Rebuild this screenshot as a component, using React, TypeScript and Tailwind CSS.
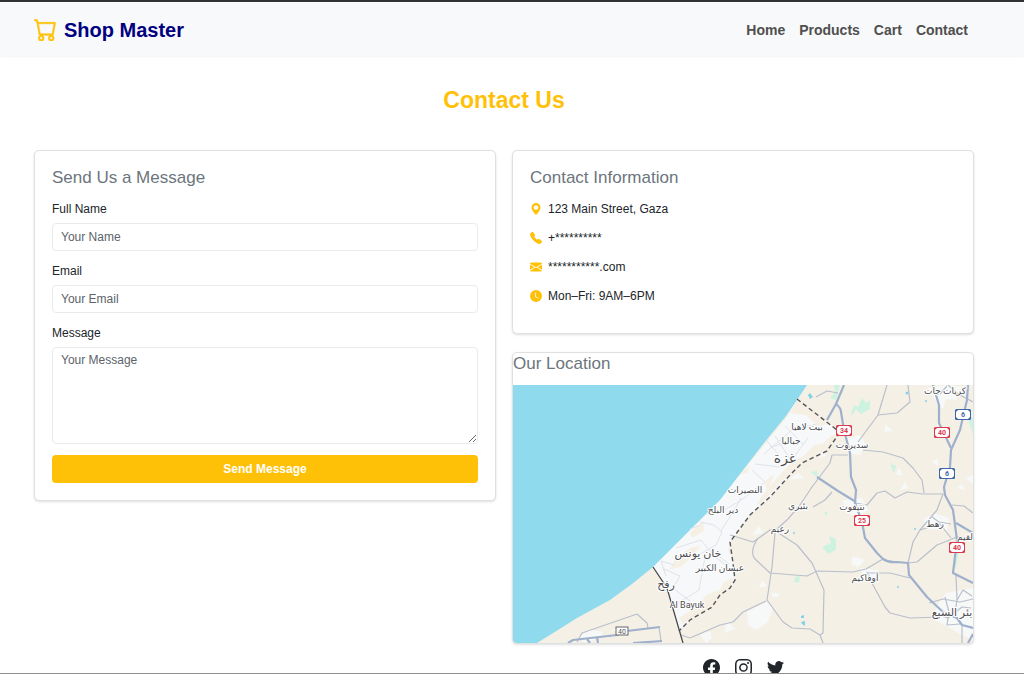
import type { ReactNode } from "react";
import {
  BsCart,
  BsClockFill,
  BsEnvelopeFill,
  BsFacebook,
  BsGeoAltFill,
  BsInstagram,
  BsTelephoneFill,
  BsTwitter,
} from "react-icons/bs";

const navLinks = ["Home", "Products", "Cart", "Contact"];

const contactRows = [
  { icon: BsGeoAltFill, text: "123 Main Street, Gaza" },
  { icon: BsTelephoneFill, text: "+**********" },
  { icon: BsEnvelopeFill, text: "***********.com" },
  { icon: BsClockFill, text: "Mon–Fri: 9AM–6PM" },
];

const socials = [
  { icon: BsFacebook, label: "Facebook" },
  { icon: BsInstagram, label: "Instagram" },
  { icon: BsTwitter, label: "Twitter" },
];

const mainRoads = [
  "M844 385L836 404L827 420",
  "M836 404Q841 408 841 412L844 430L850 453L851 477L856 490L855 503L862 522L865 538L877 553L883 559Q889 563 897 562L908 563L909 575L927 597L943 612L957 618L962 625L973 628",
  "M817 477L838 491L856 502",
  "M968 385L967 400L960 430L951 450L950 467L944 487L945 495L953 510L957 540L953 573L973 583",
  "M956 523L973 533",
  "M933 385L939 405L939 423L951 448",
  "M568 643L573 640L617 635L627 631L660 627",
  "M633 643L662 641",
  "M587 639L590 643M597 637L598 643",
  "M973 634L968 643",
];

const minorRoads = [
  "M887 385L878 415L858 442",
  "M878 415L897 413L910 402L908 385",
  "M863 450L883 452L903 458L913 468L922 480L924 493",
  "M855 503L867 505L877 493L885 491L895 498L907 492L923 494L943 494L937 510L920 530L913 542L908 563",
  "M848 455L832 455L830 463L812 487L800 505L788 519L777 529L770 530L753 542L730 535",
  "M832 492L825 500L813 507",
  "M758 538Q749 552 755 559L770 573L807 576L817 571L853 572L866 569L883 559",
  "M775 533L772 567L767 600L783 622L792 628L810 629L820 635L823 643",
  "M777 532L797 545L812 563L824 590L823 633L820 635",
  "M766 601L743 612L733 622L720 625L690 638L681 635",
  "M908 563L917 562L937 545L957 537L973 538",
  "M867 572L873 585L885 607L890 613L910 618L940 617",
  "M867 573L890 573L910 578",
  "M920 530L940 524L951 538",
  "M932 517L939 522L951 524",
  "M577 642L582 633L637 614L647 623L648 628",
  "M659 627L661 641",
  "M948 385L958 394L973 402",
  "M816 397L827 391L838 393",
  "M956 575L957 600L955 613",
  "M929 603L943 599L960 602L973 599M935 614L948 618L962 607L971 608",
  "M945 597L949 612L947 625L960 624M957 600L963 590L972 596M962 625V643",
  "M952 505L964 506L973 513M940 394L947 386",
];

const stripStreets = [
  "M764 454L792 430L817 424M775 436L790 459M785 426L803 444",
  "M755 464L780 467L794 457L808 438",
  "M770 447L790 442M778 454L766 440M752 470L765 482L740 501L724 510",
  "M700 522L714 525L722 532L716 545L702 553L690 561",
  "M690 529L700 525M676 548L701 540L714 556L728 567",
  "M664 569L680 576L673 588L690 601M666 576L661 561L674 565",
  "M721 531L736 507L741 498M705 557L699 590L678 603M712 551L729 564",
];

const townBlocks = [
  "M848 438L860 435L866 445L860 455L848 453Z",
  "M843 500L862 498L868 510L858 517L846 513Z",
  "M861 568L878 570L880 579L862 579Z",
  "M928 388L945 385L962 387L956 400L946 399L943 409L936 402Z",
  "M924 519L934 513L949 518L947 530L925 529Z",
  "M936 607L946 593L973 588V640L958 633L950 628L935 620Z",
  "M747 612L767 602L773 608L768 622L756 630L748 625Z",
  "M772 593H779V597H772ZM853 556L865 560L858 567L851 564Z",
  "M700 635L710 631L712 638L706 643ZM727 621L735 629L724 633Z",
  "M932 462L938 458V466ZM896 474L900 467L902 476ZM818 458L824 450L826 456Z",
  "M861 399L867 404L860 407ZM886 424L892 431L884 432ZM900 490L905 482L908 488Z",
  "M577 638L590 630L603 632L600 638L585 642ZM612 630L619 627L618 632Z",
  "M788 480L798 473L804 478ZM752 535L759 526L763 533ZM762 580L767 586L759 588Z",
  "M957 488L962 484L965 490ZM966 478L973 475V484Z",
];

const parks = [
  "M850 416L854 405L858 407L862 398L866 403L870 400L870 409L861 414L856 409L854 413Z",
  "M822 547L831 543L829 536L836 539L836 550L828 554Z",
  "M834 385H840L836 400L830 398L835 392Z",
  "M890 463L896 466L894 474ZM795 577L800 576L799 583L794 582Z",
  "M811 472L817 471L818 478ZM968 419L973 417V435ZM956 552L959 550L956 568L954 565ZM823 513L827 512L827 516Z",
];

const places = [
  { name: "كريات جات", x: 945, y: 394, size: 9 },
  { name: "بيت لاهيا", x: 807, y: 430, size: 9 },
  { name: "جباليا", x: 791, y: 444, size: 9 },
  { name: "غزة", x: 785, y: 463, size: 14 },
  { name: "سديروت", x: 852, y: 448, size: 9 },
  { name: "النصيرات", x: 745, y: 493, size: 9 },
  { name: "دير البلح", x: 723, y: 513, size: 9 },
  { name: "بئيري", x: 798, y: 509, size: 9 },
  { name: "نتيفوت", x: 852, y: 510, size: 9 },
  { name: "رعيم", x: 780, y: 532, size: 9 },
  { name: "خان يونس", x: 698, y: 557, size: 11 },
  { name: "عبسان الكبير", x: 720, y: 571, size: 9 },
  { name: "رفح", x: 666, y: 588, size: 11 },
  { name: "Al Bayuk", x: 687, y: 608, size: 9 },
  { name: "أوفاكيم", x: 865, y: 581, size: 9 },
  { name: "رهط", x: 935, y: 527, size: 9 },
  { name: "لقيم", x: 965, y: 540, size: 9 },
  { name: "بئر السبع", x: 952, y: 616, size: 11 },
];

const shields = [
  { no: "34", x: 844, y: 431, color: "#dc3a50" },
  { no: "40", x: 942, y: 433, color: "#dc3a50" },
  { no: "25", x: 862, y: 521, color: "#dc3a50" },
  { no: "40", x: 957, y: 548, color: "#dc3a50" },
  { no: "6", x: 963, y: 415, color: "#3f66a8" },
  { no: "6", x: 947, y: 474, color: "#3f66a8" },
];

function LocationMap() {
  return (
    <svg
      viewBox="513 385 460 258"
      role="img"
      aria-label="Map of Gaza"
      preserveAspectRatio="xMidYMid slice"
      className="block h-[258px] w-full rounded-b"
    >
      <rect x="513" y="385" width="460" height="258" fill="#f5f0e5" />
      <path
        d="M800 395L797 399L837 430L838 435L827 451L802 463L790 475L770 497L750 515L730 542L733 563L735 580L730 588L720 595L712 607L690 620L679 631L667 588L653 567L697 523L740 475L785 420Z"
        fill="#f6f8f9"
      />
      <path
        d="M797 399L829 424L818 426L806 415L790 413ZM838 435L827 451L802 463L782 481L762 503L756 505L768 488L789 465L806 454L814 445L822 444L831 436ZM730 588L712 607L683 624L679 618L698 606L706 595L720 590L724 582L734 578ZM675 560L690 548L701 546L690 558L681 567L670 569ZM738 475L750 466L747 473ZM690 533L703 521L704 531L692 538ZM727 549L731 547L732 558ZM764 482L774 474L768 491Z"
        fill="#f6efe3"
      />
      <g fill="#f7f8f8">
        {townBlocks.map((d) => (
          <path key={d} d={d} />
        ))}
      </g>
      <g fill="#cdf3e0">
        {parks.map((d) => (
          <path key={d} d={d} />
        ))}
      </g>
      <path
        d="M513 385H807L797 400L786 416L764 443L740 474L720 500L697 523L675 545L653 567L632 584L610 600L577 618L558 630L537 643H513Z"
        fill="#90daee"
      />
      <g fill="#84d2ea">
        <path d="M808 395L810 393L813 397L810 399ZM801 616L804 615V618H801ZM801 622L805 621V626L802 624Z" />
        <circle cx="907" cy="393" r="1.5" />
        <circle cx="926" cy="401" r="1" />
        <circle cx="794" cy="533" r="1" />
        <circle cx="836" cy="446" r="1" />
        <circle cx="898" cy="587" r="1" />
        <circle cx="915" cy="529" r="1" />
      </g>
      <g fill="none" stroke="#dfe3ea" strokeWidth="1">
        {stripStreets.map((d) => (
          <path key={d} d={d} />
        ))}
      </g>
      <g fill="none" stroke="#b9bfcc" strokeWidth="1.2" strokeLinejoin="round">
        {minorRoads.map((d) => (
          <path key={d} d={d} />
        ))}
      </g>
      <g fill="none" stroke="#9fb0cc" strokeWidth="2.2" strokeLinejoin="round">
        {mainRoads.map((d) => (
          <path key={d} d={d} />
        ))}
      </g>
      <path
        d="M797 399L837 430L838 435L827 451L802 463L790 475L770 497L750 515L730 542L733 563L735 580L730 588L720 595L712 607L690 620L679 631"
        fill="none"
        stroke="#55555a"
        strokeWidth="1.4"
        strokeDasharray="4.5 3"
      />
      <path d="M653 567L667 588L683 643" fill="none" stroke="#4a4a4e" strokeWidth="1.3" />
      <g
        textAnchor="middle"
        fill="#4b4b50"
        stroke="#ffffff"
        strokeWidth="2"
        strokeLinejoin="round"
        paintOrder="stroke"
        className="font-['Roboto','DejaVu_Sans',sans-serif]"
      >
        {places.map((p) => (
          <text key={p.name} x={p.x} y={p.y} fontSize={p.size}>
            {p.name}
          </text>
        ))}
      </g>
      <g textAnchor="middle" className="font-['Roboto',sans-serif]" fontSize="7" fontWeight="700">
        {shields.map((s) => (
          <g key={`${s.x}-${s.y}`}>
            <rect x={s.x - 8} y={s.y - 6} width="16" height="11" rx="1.5" fill={s.color} />
            <path
              d={`M${s.x - 5} ${s.y - 5}H${s.x + 5}L${s.x + 7} ${s.y - 3}V${s.y + 2}L${s.x + 5} ${s.y + 4}H${s.x - 5}L${s.x - 7} ${s.y + 2}V${s.y - 3}Z`}
              fill="#fff"
            />
            <text x={s.x} y={s.y + 2} fill={s.color}>
              {s.no}
            </text>
          </g>
        ))}
        <rect x="616" y="627" width="12" height="8" fill="#fff" stroke="#66676b" />
        <text x="622" y="634" fill="#55565a" fontWeight="400">
          40
        </text>
      </g>
    </svg>
  );
}

function Card({ className = "", children }: { className?: string; children: ReactNode }) {
  return (
    <section className={`rounded-[5px] border border-[#dfe0e2] bg-white shadow-sm ${className}`}>
      {children}
    </section>
  );
}

const headingClass = "text-[17px] leading-[22px] text-[#6c757d]";
const fieldClass =
  "block w-full rounded border border-[#e9eaec] bg-white px-2 text-xs text-[#212529] placeholder:text-[#5c636a]";

export default function App() {
  return (
    <div className="flex h-screen flex-col overflow-hidden border-t-2 border-b border-t-[#333333] border-b-[#8f8f8f] bg-white font-['Liberation_Sans',Arial,sans-serif] text-xs text-[#212529]">
      <header className="flex h-[54px] shrink-0 items-center justify-between border-t border-white bg-[#f8f9fb] pr-14 pl-[34px] shadow-xs">
        <a href="#" className="flex items-center gap-[7px] text-xl font-bold text-[#000080]">
          <BsCart className="size-[23px] stroke-[0.4] text-[#ffc107]" />
          Shop Master
        </a>
        <nav className="flex gap-3.5 text-sm font-bold text-[#4f4f4f]">
          {navLinks.map((name) => (
            <a key={name} href="#">
              {name}
            </a>
          ))}
        </nav>
      </header>

      <main className="pr-[50px] pl-[34px]">
        <h1 className="mt-7 mb-[34px] text-center text-[23px] leading-8 font-bold text-[#ffc107]">
          Contact Us
        </h1>

        <div className="grid grid-cols-2 items-start gap-4">
          <Card className="px-[17px] pt-4 pb-[17px]">
            <h2 className={headingClass}>Send Us a Message</h2>
            <form className="mt-[11px] flex flex-col gap-[11px]" onSubmit={(e) => e.preventDefault()}>
              <div>
                <label htmlFor="name" className="mb-[5px] block leading-[18px]">
                  Full Name
                </label>
                <input id="name" type="text" placeholder="Your Name" className={`${fieldClass} h-7`} />
              </div>
              <div>
                <label htmlFor="email" className="mb-[5px] block leading-[18px]">
                  Email
                </label>
                <input id="email" type="email" placeholder="Your Email" className={`${fieldClass} h-7`} />
              </div>
              <div>
                <label htmlFor="message" className="mb-[5px] block leading-[18px]">
                  Message
                </label>
                <textarea
                  id="message"
                  placeholder="Your Message"
                  className={`${fieldClass} h-[97px] resize-y py-1`}
                />
              </div>
              <button type="submit" className="h-7 rounded bg-[#ffc107] font-bold text-white">
                Send Message
              </button>
            </form>
          </Card>

          <div>
            <Card className="px-[17px] pt-4 pb-7">
              <h2 className={headingClass}>Contact Information</h2>
              <ul className="mt-[11px] flex flex-col gap-[11px]">
                {contactRows.map(({ icon: Icon, text }) => (
                  <li key={text} className="flex items-center gap-[6px] leading-[18px]">
                    <Icon className="size-3 text-[#ffc107]" />
                    {text}
                  </li>
                ))}
              </ul>
            </Card>

            <Card className="mt-[18px]">
              <h2 className={`${headingClass} mb-[10px]`}>Our Location</h2>
              <LocationMap />
            </Card>

            <div className="mt-[15px] flex justify-center gap-[15px]">
              {socials.map(({ icon: Icon, label }) => (
                <a key={label} href="#" aria-label={label}>
                  <Icon className="size-[17px]" />
                </a>
              ))}
            </div>
          </div>
        </div>
      </main>
    </div>
  );
}
